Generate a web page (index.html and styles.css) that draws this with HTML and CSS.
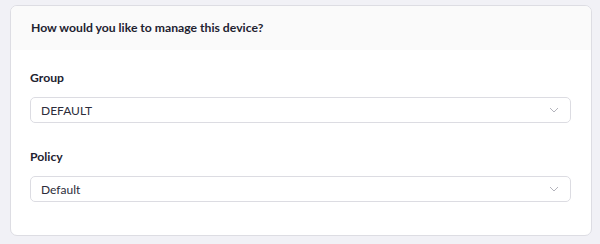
FILE: index.html
```html
<!DOCTYPE html>
<html lang="en">
<head>
    <meta charset="UTF-8">
    <meta name="viewport" content="width=device-width, initial-scale=1.0">
    <title>Manage device</title>
    <link rel="stylesheet" href="styles.css">
</head>
<body>
    <div class="card">
        <div class="card-header">How would you like to manage this device?</div>
        <div class="card-body">
            <div class="field">
                <label class="field-label">Group</label>
                <div class="select">
                    <span>DEFAULT</span>
                    <svg class="chevron" width="10" height="6" viewBox="0 0 10 6"><path d="M1 1l4 4 4-4" fill="none" stroke="#b4b4bc" stroke-width="1"/></svg>
                </div>
            </div>
            <div class="field">
                <label class="field-label">Policy</label>
                <div class="select">
                    <span>Default</span>
                    <svg class="chevron" width="10" height="6" viewBox="0 0 10 6"><path d="M1 1l4 4 4-4" fill="none" stroke="#b4b4bc" stroke-width="1"/></svg>
                </div>
            </div>
        </div>
    </div>
</body>
</html>
```

FILE: styles.css
```css
body {
    margin: 0;
    padding: 5px 8px 7px 10px;
    background: #f1f1f6;
    font-family: Lato, "Noto Sans", sans-serif;
    color: #222230;
}

.card {
    background: #fff;
    border: 1px solid #dddde3;
    border-radius: 7px;
    overflow: hidden;
}

.card-header {
    background: #fafafa;
    height: 44px;
    line-height: 44px;
    padding-left: 20px;
    font-size: 12.2px;
    font-weight: 700;
}

.card-body {
    padding: 19px 20px 33px 19px;
}

.field {
    display: flex;
    flex-direction: column;
    margin-bottom: 25px;
}

.field:last-child {
    margin-bottom: 0;
}

.field-label {
    font-size: 12.2px;
    font-weight: 700;
    line-height: 17px;
    margin-bottom: 11px;
}

.select {
    display: flex;
    align-items: center;
    justify-content: space-between;
    height: 24px;
    border: 1px solid #dcdce2;
    border-radius: 5px;
    padding: 0 10px;
    font-size: 12px;
    color: #2c2c3a;
}

.chevron {
    margin-right: 1px;
}
```
